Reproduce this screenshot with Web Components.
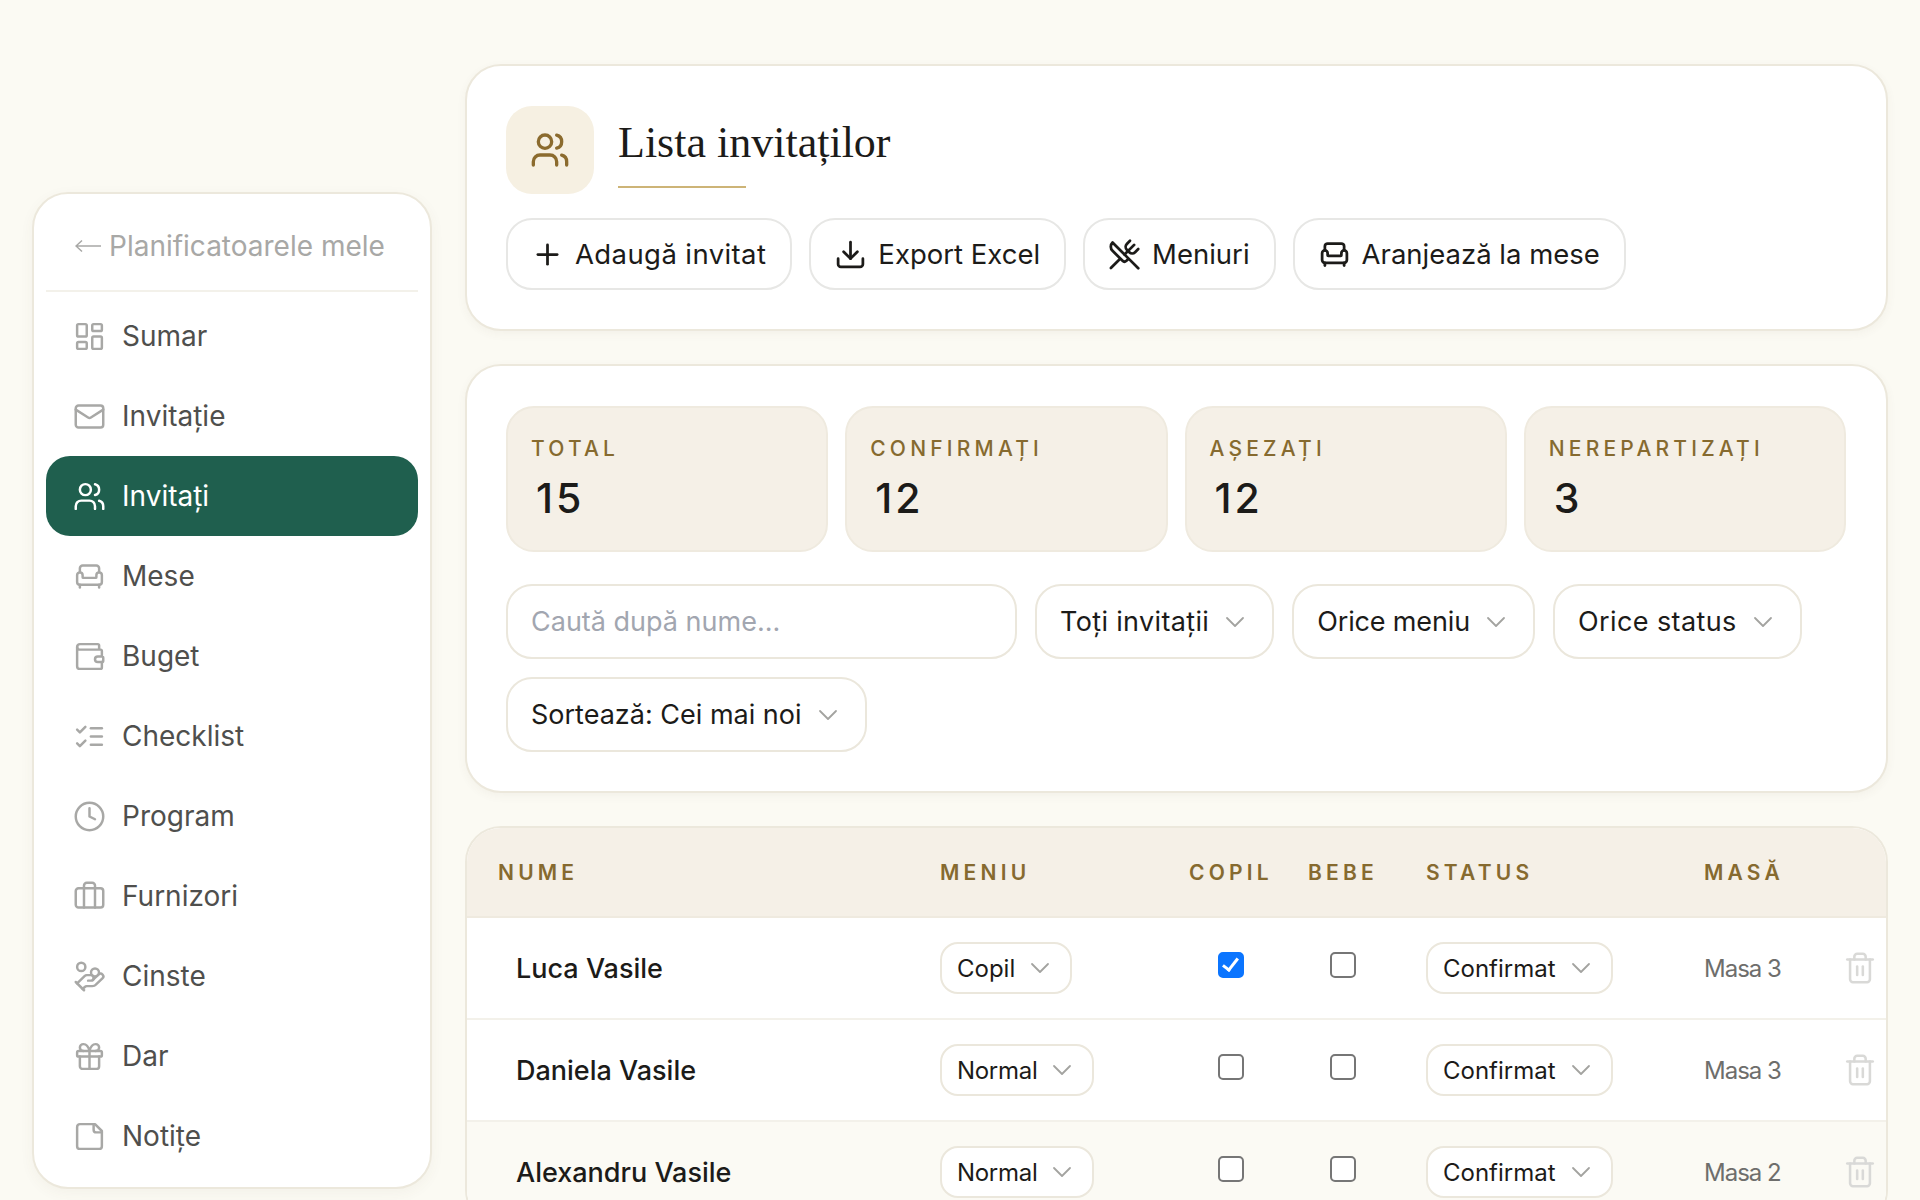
<!DOCTYPE html>
<html lang="ro">
<head>
<meta charset="utf-8">
<title>Lista invitaților</title>
<style>
    html, body { margin: 0; height: 1200px; overflow: hidden; background: #fbfaf3; }
    body { font-family: Inter, "Liberation Sans", sans-serif; color: #1c1b19; }
    .page { display: flex; align-items: flex-start; gap: 33px; padding: 64px 32px 0 32px; }
    .main { flex: 1; min-width: 0; display: flex; flex-direction: column; gap: 33px; }
</style>
</head>
<body>
<div class="page">
    <app-sidebar>
        <nav-item icon="dashboard">Sumar</nav-item>
        <nav-item icon="mail">Invitație</nav-item>
        <nav-item icon="users" active>Invitați</nav-item>
        <nav-item icon="armchair">Mese</nav-item>
        <nav-item icon="wallet">Buget</nav-item>
        <nav-item icon="checks">Checklist</nav-item>
        <nav-item icon="clock">Program</nav-item>
        <nav-item icon="briefcase">Furnizori</nav-item>
        <nav-item icon="coins">Cinste</nav-item>
        <nav-item icon="gift">Dar</nav-item>
        <nav-item icon="note">Notițe</nav-item>
    </app-sidebar>
    <div class="main">
        <page-header title="Lista invitaților">
            <action-button icon="plus" style="letter-spacing: 0.4px">Adaugă invitat</action-button>
            <action-button icon="download">Export Excel</action-button>
            <action-button icon="utensils">Meniuri</action-button>
            <action-button icon="armchair">Aranjează la mese</action-button>
        </page-header>
        <stats-panel>
            <stat-card slot="stats" label="Total" value="15"></stat-card>
            <stat-card slot="stats" label="Confirmați" value="12"></stat-card>
            <stat-card slot="stats" label="Așezați" value="12"></stat-card>
            <stat-card slot="stats" label="Nerepartizați" value="3"></stat-card>
            <search-box slot="filters" placeholder="Caută după nume..."></search-box>
            <filter-select slot="filters" style="letter-spacing: 0.35px">Toți invitații</filter-select>
            <filter-select slot="filters" style="letter-spacing: -0.15px">Orice meniu</filter-select>
            <filter-select slot="filters" style="letter-spacing: 0.4px">Orice status</filter-select>
            <filter-select slot="filters">Sortează: Cei mai noi</filter-select>
        </stats-panel>
        <guest-table>
            <guest-row name="Luca Vasile" menu="Copil" child status="Confirmat" seat="Masa 3"></guest-row>
            <guest-row name="Daniela Vasile" menu="Normal" status="Confirmat" seat="Masa 3"></guest-row>
            <guest-row name="Alexandru Vasile" menu="Normal" status="Confirmat" seat="Masa 2" tinted></guest-row>
        </guest-table>
    </div>
</div>

<script>
var ICONS = {
    dashboard: '<rect x="3" y="3" width="7" height="9" rx="1"/><rect x="14" y="3" width="7" height="5" rx="1"/><rect x="14" y="12" width="7" height="9" rx="1"/><rect x="3" y="16" width="7" height="5" rx="1"/>',
    mail: '<rect x="2" y="4" width="20" height="16" rx="2"/><path d="m22 7-8.97 5.7a1.94 1.94 0 0 1-2.06 0L2 7"/>',
    users: '<path d="M16 21v-2a4 4 0 0 0-4-4H6a4 4 0 0 0-4 4v2"/><circle cx="9" cy="7" r="4"/><path d="M22 21v-2a4 4 0 0 0-3-3.87"/><path d="M16 3.13a4 4 0 0 1 0 7.75"/>',
    armchair: '<path d="M19 9V6a2 2 0 0 0-2-2H7a2 2 0 0 0-2 2v3"/><path d="M3 16a2 2 0 0 0 2 2h14a2 2 0 0 0 2-2v-5a2 2 0 0 0-4 0v1.5a.5.5 0 0 1-.5.5h-9a.5.5 0 0 1-.5-.5V11a2 2 0 0 0-4 0z"/><path d="M5 18v2"/><path d="M19 18v2"/>',
    wallet: '<path d="M19 7V4a1 1 0 0 0-1-1H5a2 2 0 0 0 0 4h15a1 1 0 0 1 1 1v4h-3a2 2 0 0 0 0 4h3a1 1 0 0 0 1-1v-2a1 1 0 0 0-1-1"/><path d="M3 5v14a2 2 0 0 0 2 2h15a1 1 0 0 0 1-1v-4"/>',
    checks: '<path d="m3 17 2 2 4-4"/><path d="m3 7 2 2 4-4"/><path d="M13 6h8"/><path d="M13 12h8"/><path d="M13 18h8"/>',
    clock: '<circle cx="12" cy="12" r="10"/><polyline points="12 6 12 12 16 14"/>',
    briefcase: '<path d="M16 20V4a2 2 0 0 0-2-2h-4a2 2 0 0 0-2 2v16"/><rect x="2" y="6" width="20" height="14" rx="2"/>',
    coins: '<path d="M11 15h2a2 2 0 1 0 0-4h-3c-.6 0-1.1.2-1.4.6L3 17"/><path d="m7 21 1.6-1.4c.3-.4.8-.6 1.4-.6h4c1.1 0 2.1-.4 2.8-1.2l4.6-4.4a2 2 0 0 0-2.75-2.91l-4.2 3.9"/><path d="m2 16 6 6"/><circle cx="16" cy="9" r="2.9"/><circle cx="6" cy="5" r="3"/>',
    gift: '<rect x="3" y="8" width="18" height="4" rx="1"/><path d="M12 8v13"/><path d="M19 12v7a2 2 0 0 1-2 2H7a2 2 0 0 1-2-2v-7"/><path d="M7.5 8a2.5 2.5 0 0 1 0-5A4.8 8 0 0 1 12 8a4.8 8 0 0 1 4.5-5 2.5 2.5 0 0 1 0 5"/>',
    note: '<path d="M16 3H5a2 2 0 0 0-2 2v14a2 2 0 0 0 2 2h14a2 2 0 0 0 2-2V8Z"/><path d="M15 3v4a2 2 0 0 0 2 2h4"/>',
    plus: '<path d="M5 12h14"/><path d="M12 5v14"/>',
    download: '<path d="M21 15v4a2 2 0 0 1-2 2H5a2 2 0 0 1-2-2v-4"/><polyline points="7 10 12 15 17 10"/><line x1="12" y1="15" x2="12" y2="3"/>',
    utensils: '<path d="m16 2-2.3 2.3a3 3 0 0 0 0 4.2l1.8 1.8a3 3 0 0 0 4.2 0L22 8"/><path d="M15 15 3.3 3.3a4.2 4.2 0 0 0 0 6l7.3 7.3c.7.7 2 .7 2.8 0L15 15Zm0 0 7 7"/><path d="m2.1 21.8 6.4-6.3"/><path d="m19 5-7 7"/>',
    trash: '<path d="M3 6h18"/><path d="M19 6v14c0 1-1 2-2 2H7c-1 0-2-1-2-2V6"/><path d="M8 6V4c0-1 1-2 2-2h4c1 0 2 1 2 2v2"/><line x1="10" y1="11" x2="10" y2="17"/><line x1="14" y1="11" x2="14" y2="17"/>'
};

var CHEVRON = '<svg width="20" height="12" viewBox="0 0 20 12" fill="none" stroke="#a3a3a0" stroke-width="1.8" stroke-linecap="round" stroke-linejoin="round"><path d="M2 2l8 8 8-8"/></svg>';

class BaseElement extends HTMLElement {
    constructor() {
        super();
        this.attachShadow({ mode: "open" });
    }

    connectedCallback() {
        this.render();
    }
}

class XIcon extends BaseElement {
    render() {
        var size = this.getAttribute("size") || 33;
        var stroke = this.getAttribute("stroke") || 2;
        this.shadowRoot.innerHTML = `
            <style>
                :host { display: block; width: ${size}px; height: ${size}px; flex: none; }
                svg { display: block; }
            </style>
            <svg width="${size}" height="${size}" viewBox="0 0 24 24" fill="none" stroke="currentColor"
                stroke-width="${stroke}" stroke-linecap="round" stroke-linejoin="round">${ICONS[this.getAttribute("name")] || ""}</svg>
        `;
    }
}

class AppSidebar extends BaseElement {
    render() {
        this.shadowRoot.innerHTML = `
            <style>
                :host {
                    display: block;
                    flex: none;
                    width: 400px;
                    height: 997px;
                    margin-top: 128px;
                    box-sizing: border-box;
                    padding: 0 12px 12px;
                    background: #ffffff;
                    border: 2px solid #ece8dc;
                    border-radius: 36px;
                    box-shadow: 0 4px 14px rgba(90, 80, 50, 0.05);
                }
                .back {
                    display: flex;
                    align-items: center;
                    height: 98px;
                    box-sizing: border-box;
                    padding: 8px 0 0 29px;
                    gap: 8px;
                    color: #a8a8a6;
                    font-size: 28px;
                    border-bottom: 2px solid #f3f1ea;
                    margin-bottom: 4px;
                }
            </style>
            <div class="back"><svg width="26" height="14" viewBox="0 0 26 14" fill="none" stroke="#a8a8a6" stroke-width="1.5"><path d="M26 7H1M7 1.5L1 7l6 5.5"/></svg><span>Planificatoarele mele</span></div>
            <slot></slot>
        `;
    }
}

class NavItem extends BaseElement {
    render() {
        var active = this.hasAttribute("active");
        this.shadowRoot.innerHTML = `
            <style>
                :host {
                    display: flex;
                    align-items: center;
                    height: 80px;
                    box-sizing: border-box;
                    padding-left: 27px;
                    gap: 16px;
                    font-size: 28px;
                    color: ${active ? "#ffffff" : "#4f4f4d"};
                    background: ${active ? "#1f5f4e" : "transparent"};
                    border-radius: 24px;
                }
                x-icon { color: ${active ? "#ffffff" : "#a8a8a6"}; }
            </style>
            <x-icon name="${this.getAttribute("icon")}" stroke="1.8"></x-icon>
            <slot></slot>
        `;
    }
}

class PageHeader extends BaseElement {
    render() {
        this.shadowRoot.innerHTML = `
            <style>
                :host {
                    display: block;
                    height: 267px;
                    box-sizing: border-box;
                    padding: 40px 39px 0;
                    background: #ffffff;
                    border: 2px solid #ece8dc;
                    border-radius: 36px;
                    box-shadow: 0 3px 10px rgba(90, 80, 50, 0.05);
                }
                .top { display: flex; gap: 24px; height: 88px; }
                .badge {
                    display: flex;
                    align-items: center;
                    justify-content: center;
                    width: 88px;
                    height: 88px;
                    border-radius: 26px;
                    background: #f6f0e2;
                    color: #8b6b2e;
                }
                h1 {
                    margin: 0;
                    padding-top: 11px;
                    font: 400 44px/1.2 "Liberation Serif", serif;
                    color: #1c1b19;
                    width: 128px;
                    height: 69px;
                    box-sizing: content-box;
                    white-space: nowrap;
                    border-bottom: 2px solid #cdb477;
                }
                .actions { display: flex; gap: 17px; margin-top: 24px; }
            </style>
            <div class="top">
                <div class="badge"><x-icon name="users" size="40" stroke="2"></x-icon></div>
                <h1>${this.getAttribute("title")}</h1>
            </div>
            <div class="actions"><slot></slot></div>
        `;
    }
}

class ActionButton extends BaseElement {
    render() {
        this.shadowRoot.innerHTML = `
            <style>
                :host {
                    display: flex;
                    align-items: center;
                    height: 72px;
                    box-sizing: border-box;
                    padding: 0 24px 0 23px;
                    gap: 11px;
                    font-size: 27.5px;
                    color: #1c1b19;
                    background: #ffffff;
                    border: 2px solid #e7e7e5;
                    border-radius: 26px;
                }
            </style>
            <x-icon name="${this.getAttribute("icon")}" stroke="2"></x-icon>
            <slot></slot>
        `;
    }
}

class StatsPanel extends BaseElement {
    render() {
        this.shadowRoot.innerHTML = `
            <style>
                :host {
                    display: block;
                    height: 429px;
                    box-sizing: border-box;
                    padding: 40px 40px 0 39px;
                    background: #ffffff;
                    border: 2px solid #ece8dc;
                    border-radius: 36px;
                    box-shadow: 0 3px 10px rgba(90, 80, 50, 0.05);
                }
                .stats { display: grid; grid-template-columns: repeat(4, 1fr); gap: 17px; }
                .filters { display: flex; flex-wrap: wrap; gap: 18px; margin-top: 32px; }
            </style>
            <div class="stats"><slot name="stats"></slot></div>
            <div class="filters"><slot name="filters"></slot></div>
        `;
    }
}

class StatCard extends BaseElement {
    render() {
        this.shadowRoot.innerHTML = `
            <style>
                :host {
                    display: block;
                    height: 146px;
                    box-sizing: border-box;
                    padding: 26px 23px 0;
                    background: #f5f0e7;
                    border: 2px solid #efeadf;
                    border-radius: 28px;
                }
                .label {
                    font-size: 21px;
                    font-weight: 500;
                    line-height: 30px;
                    letter-spacing: 4.2px;
                    text-transform: uppercase;
                    color: #866a2f;
                }
                .value {
                    margin-top: 9px;
                    padding-left: 5px;
                    font-size: 41px;
                    line-height: 50px;
                    font-weight: 550;
                    letter-spacing: 3px;
                    color: #1c1b19;
                }
            </style>
            <div class="label">${this.getAttribute("label")}</div>
            <div class="value">${this.getAttribute("value")}</div>
        `;
    }
}

class SearchBox extends BaseElement {
    render() {
        this.shadowRoot.innerHTML = `
            <style>
                :host { display: block; width: 511px; height: 75px; }
                input {
                    width: 100%;
                    height: 100%;
                    box-sizing: border-box;
                    padding: 0 23px;
                    font: 400 27px Inter, "Liberation Sans", sans-serif;
                    color: #1c1b19;
                    background: #ffffff;
                    border: 2px solid #ebe7dc;
                    border-radius: 26px;
                    outline: none;
                }
                input::placeholder { color: #a2a6b0; opacity: 1; }
            </style>
            <input type="text" placeholder="${this.getAttribute("placeholder")}">
        `;
    }
}

class FilterSelect extends BaseElement {
    render() {
        this.shadowRoot.innerHTML = `
            <style>
                :host {
                    display: flex;
                    align-items: center;
                    height: 75px;
                    box-sizing: border-box;
                    padding: 0 27px 0 23px;
                    gap: 16px;
                    font-size: 27px;
                    color: #1c1b19;
                    background: #ffffff;
                    border: 2px solid #ebe7dc;
                    border-radius: 26px;
                }
                svg { display: block; flex: none; }
            </style>
            <slot></slot>${CHEVRON}
        `;
    }
}

class RowSelect extends BaseElement {
    render() {
        this.shadowRoot.innerHTML = `
            <style>
                :host {
                    display: inline-flex;
                    align-items: center;
                    height: 52px;
                    box-sizing: border-box;
                    padding: 0 20px 0 15px;
                    gap: 15px;
                    font-size: 24px;
                    color: #1c1b19;
                    background: #ffffff;
                    border: 2px solid #ebe7dc;
                    border-radius: 18px;
                }
                svg { display: block; flex: none; }
            </style>
            <slot></slot>${CHEVRON}
        `;
    }
}

var GRID = "442px 236px 110px 114px 304px 143px 1fr";

class GuestTable extends BaseElement {
    render() {
        this.shadowRoot.innerHTML = `
            <style>
                :host {
                    display: block;
                    background: #ffffff;
                    border: 2px solid #ece8dc;
                    border-radius: 36px;
                    overflow: hidden;
                }
                .head {
                    display: grid;
                    grid-template-columns: ${GRID};
                    align-items: center;
                    height: 88px;
                    padding-left: 31px;
                    background: #f5f0e7;
                    border-bottom: 2px solid #efeadf;
                    font-size: 21px;
                    font-weight: 600;
                    letter-spacing: 4.2px;
                    color: #866a2f;
                }
                .mid { text-align: center; }
                .pad { padding-left: 26px; }
            </style>
            <div class="head">
                <span>NUME</span><span>MENIU</span><span class="mid">COPIL</span><span class="mid">BEBE</span>
                <span class="pad">STATUS</span><span>MASĂ</span><span></span>
            </div>
            <slot></slot>
        `;
    }
}

class GuestRow extends BaseElement {
    render() {
        var menu = this.getAttribute("menu");
        this.shadowRoot.innerHTML = `
            <style>
                :host {
                    display: grid;
                    grid-template-columns: ${GRID};
                    align-items: center;
                    height: 102px;
                    box-sizing: border-box;
                    padding-left: 31px;
                    background: ${this.hasAttribute("tinted") ? "#fbfaf4" : "#ffffff"};
                    border-bottom: 2px solid #f3f1ea;
                }
                .name { padding-left: 18px; font-size: 27px; font-weight: 450; color: #1c1b19; }
                .check { justify-self: center; margin-bottom: 7px; }
                .pad { padding-left: 26px; }
                input {
                    appearance: none;
                    position: relative;
                    display: block;
                    width: 26px;
                    height: 26px;
                    margin: 0;
                    background: #ffffff;
                    border: 2px solid #767676;
                    border-radius: 5px;
                }
                input:checked { background: #0b75ff; border-color: #0b75ff; }
                input:checked::after {
                    content: "";
                    position: absolute;
                    left: 6px;
                    top: 1px;
                    width: 6px;
                    height: 13px;
                    border: solid #ffffff;
                    border-width: 0 3.5px 3.5px 0;
                    transform: rotate(38deg);
                }
                .seat { font-size: 24px; letter-spacing: -1px; color: #6e6e6c; }
                x-icon { color: #d9d9d7; justify-self: start; margin-left: -4px; }
            </style>
            <span class="name">${this.getAttribute("name")}</span>
            <span><row-select style="letter-spacing: ${menu === "Normal" ? "-0.3px" : "0"}">${menu}</row-select></span>
            <span class="check"><input type="checkbox" ${this.hasAttribute("child") ? "checked" : ""}></span>
            <span class="check"><input type="checkbox"></span>
            <span class="pad"><row-select>${this.getAttribute("status")}</row-select></span>
            <span class="seat">${this.getAttribute("seat")}</span>
            <x-icon name="trash" size="34" stroke="1.8"></x-icon>
        `;
    }
}

customElements.define("x-icon", XIcon);
customElements.define("app-sidebar", AppSidebar);
customElements.define("nav-item", NavItem);
customElements.define("page-header", PageHeader);
customElements.define("action-button", ActionButton);
customElements.define("stats-panel", StatsPanel);
customElements.define("stat-card", StatCard);
customElements.define("search-box", SearchBox);
customElements.define("filter-select", FilterSelect);
customElements.define("row-select", RowSelect);
customElements.define("guest-table", GuestTable);
customElements.define("guest-row", GuestRow);
</script>
</body>
</html>
